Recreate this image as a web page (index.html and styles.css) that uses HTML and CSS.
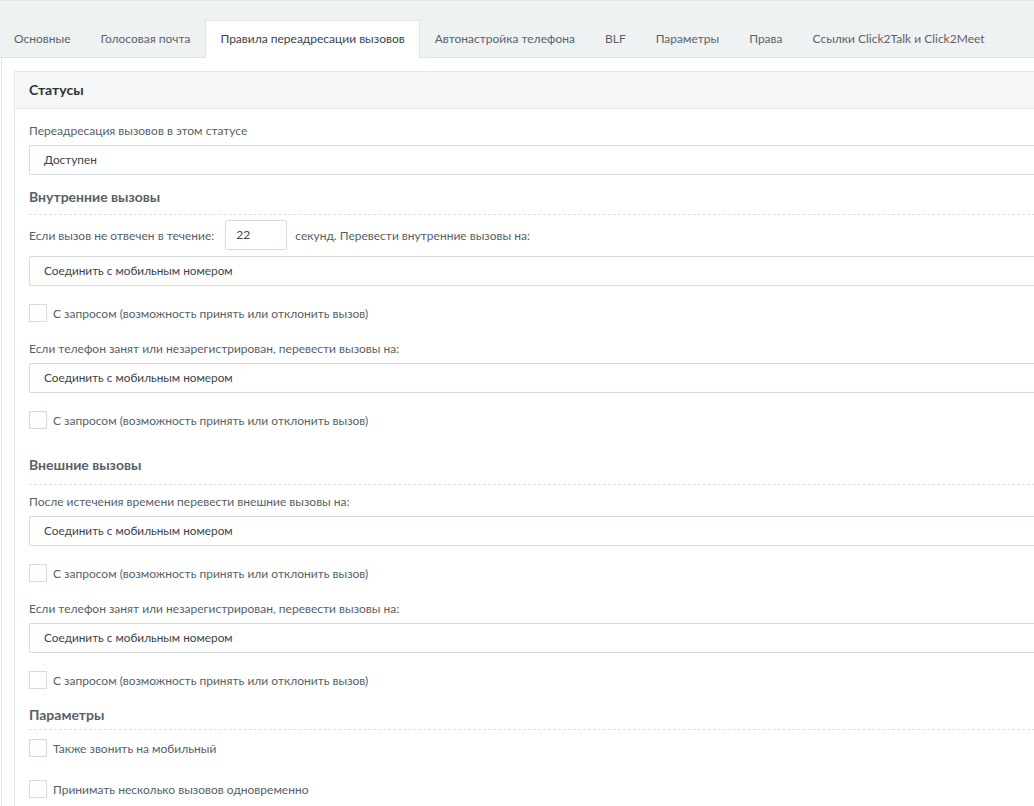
FILE: index.html
```html
<!DOCTYPE html>
<html lang="ru">
<head>
<meta charset="utf-8">
<link rel="stylesheet" href="styles.css">
</head>
<body>
<div class="page">
  <nav class="tabs">
    <a class="tab">Основные</a>
    <a class="tab">Голосовая почта</a>
    <a class="tab active">Правила переадресации вызовов</a>
    <a class="tab">Автонастройка телефона</a>
    <a class="tab">BLF</a>
    <a class="tab">Параметры</a>
    <a class="tab">Права</a>
    <a class="tab">Ссылки Click2Talk и Click2Meet</a>
  </nav>
  <div class="content">
    <section class="panel">
      <div class="panel-head">Статусы</div>
      <div class="panel-body">
        <div class="label">Переадресация вызовов в этом статусе</div>
        <div class="select">Доступен</div>

        <h3 class="group">Внутренние вызовы</h3>
        <div class="inline-row">
          <span>Если вызов не отвечен в течение:</span>
          <div class="num">22</div>
          <span>секунд. Перевести внутренние вызовы на:</span>
        </div>
        <div class="select">Соединить с мобильным номером</div>
        <label class="check"><span class="box"></span>С запросом (возможность принять или отклонить вызов)</label>
        <div class="label">Если телефон занят или незарегистрирован, перевести вызовы на:</div>
        <div class="select">Соединить с мобильным номером</div>
        <label class="check"><span class="box"></span>С запросом (возможность принять или отклонить вызов)</label>

        <h3 class="group external">Внешние вызовы</h3>
        <div class="label">После истечения времени перевести внешние вызовы на:</div>
        <div class="select">Соединить с мобильным номером</div>
        <label class="check"><span class="box"></span>С запросом (возможность принять или отклонить вызов)</label>
        <div class="label">Если телефон занят или незарегистрирован, перевести вызовы на:</div>
        <div class="select">Соединить с мобильным номером</div>
        <label class="check"><span class="box"></span>С запросом (возможность принять или отклонить вызов)</label>

        <h3 class="group params">Параметры</h3>
        <label class="check"><span class="box"></span>Также звонить на мобильный</label>
        <label class="check"><span class="box"></span>Принимать несколько вызовов одновременно</label>
      </div>
    </section>
  </div>
</div>
</body>
</html>
```

FILE: styles.css
```css
html, body {
  margin: 0;
  padding: 0;
  background: #ffffff;
}
body {
  font-family: "Lato", "Noto Sans", sans-serif;
  font-size: 12px;
  color: #575f65;
  overflow: hidden;
  width: 1034px;
  height: 806px;
}
.page {
  width: 1100px;
}
.tabs {
  display: flex;
  align-items: flex-end;
  height: 58px;
  background: #eff2f3;
  border-top: 1px solid #e3e7e8;
  border-bottom: 1px solid #dfe4e5;
  box-sizing: border-box;
}
.tab {
  display: block;
  padding: 0 15px;
  height: 37px;
  line-height: 35px;
  color: #5b6369;
  font-size: 12px;
  white-space: nowrap;
  margin-bottom: -1px;
}
.tab:first-child {
  padding-left: 14px;
}
.tab.active {
  background: #ffffff;
  border: 1px solid #dfe4e5;
  border-bottom: none;
  color: #3c4348;
  height: 37px;
  line-height: 35px;
  padding: 0 14px;
}
.content {
  border-left: 1px solid #e3e8e9;
  margin-left: 1px;
  padding: 13px 0 0 12px;
}
.panel {
  border: 1px solid #e3e8e8;
  border-right: none;
}
.panel-head {
  height: 36px;
  line-height: 35px;
  background: #f5f7f7;
  border-bottom: 1px solid #e6ebeb;
  padding-left: 14px;
  font-weight: bold;
  font-size: 14px;
  color: #2f3438;
}
.panel-body {
  padding: 14px 0 20px 14px;
}
.label {
  line-height: 16px;
  margin: 0 0 6px;
}
.check + .label {
  margin-top: 19px;
}
.select {
  height: 28px;
  line-height: 28px;
  border: 1px solid #d3dddd;
  border-right: none;
  border-radius: 2px 0 0 2px;
  padding-left: 14px;
  font-size: 11.8px;
  color: #3c4449;
}
.group {
  margin: 13px 0 5px;
  font-size: 14px;
  font-weight: bold;
  color: #596167;
  line-height: 18px;
  padding-bottom: 8px;
  border-bottom: 1px dashed #dde1e2;
}
.group.external {
  margin-top: 27px;
  padding-bottom: 10px;
  margin-bottom: 9px;
}
.group.params {
  margin-top: 17px;
  padding-bottom: 5px;
  margin-bottom: 0;
}
.group.params + .check {
  margin-top: 9px;
}
.inline-row {
  display: flex;
  align-items: center;
  height: 30px;
  margin-bottom: 6px;
}
.num {
  width: 62px;
  height: 30px;
  line-height: 28px;
  border: 1px solid #d3dddd;
  border-radius: 2px;
  padding-left: 10px;
  box-sizing: border-box;
  margin: 0 8px 0 11px;
  color: #3c4449;
}
.check {
  display: flex;
  align-items: center;
  height: 18px;
  margin: 18px 0 0;
  color: #575f65;
}
.check + .check {
  margin-top: 23px;
}
.box {
  width: 16px;
  height: 16px;
  border: 1px solid #d3dddd;
  background: #fff;
  margin-right: 6px;
}
```
